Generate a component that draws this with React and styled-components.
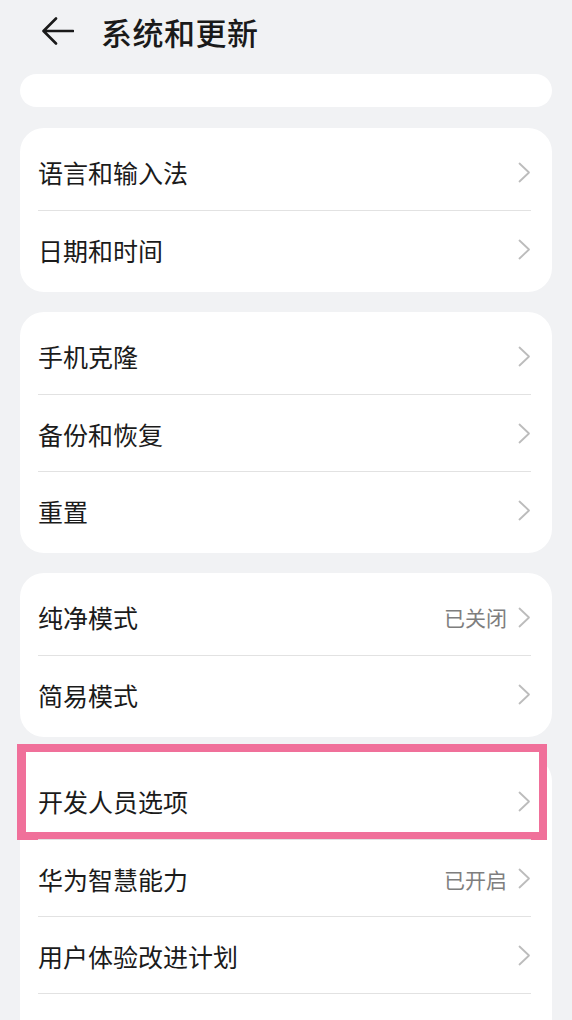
import React from "react";
import styled, { createGlobalStyle } from "styled-components";

const GlobalStyle = createGlobalStyle`
  html, body {
    margin: 0;
    padding: 0;
    background: #f1f2f4;
    font-family: "Noto Sans CJK SC", "Noto Sans", sans-serif;
  }
`;

const Screen = styled.div`
  width: 572px;
  height: 1020px;
  overflow: hidden;
  background: #f1f2f4;
  display: flex;
  flex-direction: column;
`;

const Header = styled.header`
  height: 62px;
  display: flex;
  align-items: center;
  padding-left: 42px;
  gap: 27px;
  flex-shrink: 0;
`;

const Title = styled.h1`
  margin: 0;
  font-size: 31px;
  font-weight: 500;
  color: #1a1a1a;
  letter-spacing: 0.5px;
`;

const List = styled.div`
  display: flex;
  flex-direction: column;
  gap: 20px;
  padding: 0 20px;
`;

const Stub = styled.div`
  height: 33px;
  margin-top: 12px;
  margin-bottom: 1px;
  background: #fff;
  border-radius: 18px;
`;

const Card = styled.section`
  background: #fff;
  border-radius: 24px;
  padding: 5px 0;
  flex-shrink: 0;
`;

const Row = styled.div`
  position: relative;
  height: 77px;
  display: flex;
  align-items: center;
  padding: 0 21px 0 18px;
  & + & > .inner {
    border-top: 1px solid #e2e2e2;
  }
`;

const Inner = styled.div`
  position: relative;
  z-index: 1;
  flex: 1;
  height: 100%;
  display: flex;
  align-items: center;
  justify-content: space-between;
  box-sizing: border-box;
  padding-top: 1px;
`;

const Label = styled.span`
  font-size: 25px;
  color: #1b1b1b;
`;

const Right = styled.span`
  display: flex;
  align-items: center;
  gap: 11px;
`;

const Value = styled.span`
  font-size: 21px;
  color: #7e7e7e;
`;

const Highlight = styled.div`
  position: absolute;
  z-index: 0;
  left: -3px;
  right: 5px;
  top: -18px;
  bottom: -1px;
  background: #fff;
  border: 8px solid #f0709a;
  border-left-width: 9px;
  pointer-events: none;
`;

const BackArrow = () => (
  <svg width="32" height="28" viewBox="0 0 32 28" fill="none">
    <path
      d="M31 14H2M14 1.5L1.5 14 14 26.5"
      stroke="#1a1a1a"
      strokeWidth="2.6"
      strokeLinecap="round"
      strokeLinejoin="round"
    />
  </svg>
);

const Chevron = () => (
  <svg width="13" height="21" viewBox="0 0 13 21" fill="none">
    <path
      d="M1.5 1.5L11 10.5 1.5 19.5"
      stroke="#bcbcbc"
      strokeWidth="1.8"
      strokeLinecap="round"
      strokeLinejoin="round"
    />
  </svg>
);

const groups = [
  [{ label: "语言和输入法" }, { label: "日期和时间" }],
  [{ label: "手机克隆" }, { label: "备份和恢复" }, { label: "重置" }],
  [{ label: "纯净模式", value: "已关闭" }, { label: "简易模式" }],
  [
    { label: "开发人员选项", marked: true },
    { label: "华为智慧能力", value: "已开启" },
    { label: "用户体验改进计划" },
    { label: "关于手机" },
  ],
];

export default function App() {
  return (
    <>
      <GlobalStyle />
      <Screen>
        <Header>
          <BackArrow />
          <Title>系统和更新</Title>
        </Header>
        <List>
          <Stub />
          {groups.map((rows, gi) => (
            <Card key={gi}>
              {rows.map((r) => (
                <Row key={r.label}>
                  {r.marked && <Highlight />}
                  <Inner className="inner">
                    <Label>{r.label}</Label>
                    <Right>
                      {r.value && <Value>{r.value}</Value>}
                      <Chevron />
                    </Right>
                  </Inner>
                </Row>
              ))}
            </Card>
          ))}
        </List>
      </Screen>
    </>
  );
}
